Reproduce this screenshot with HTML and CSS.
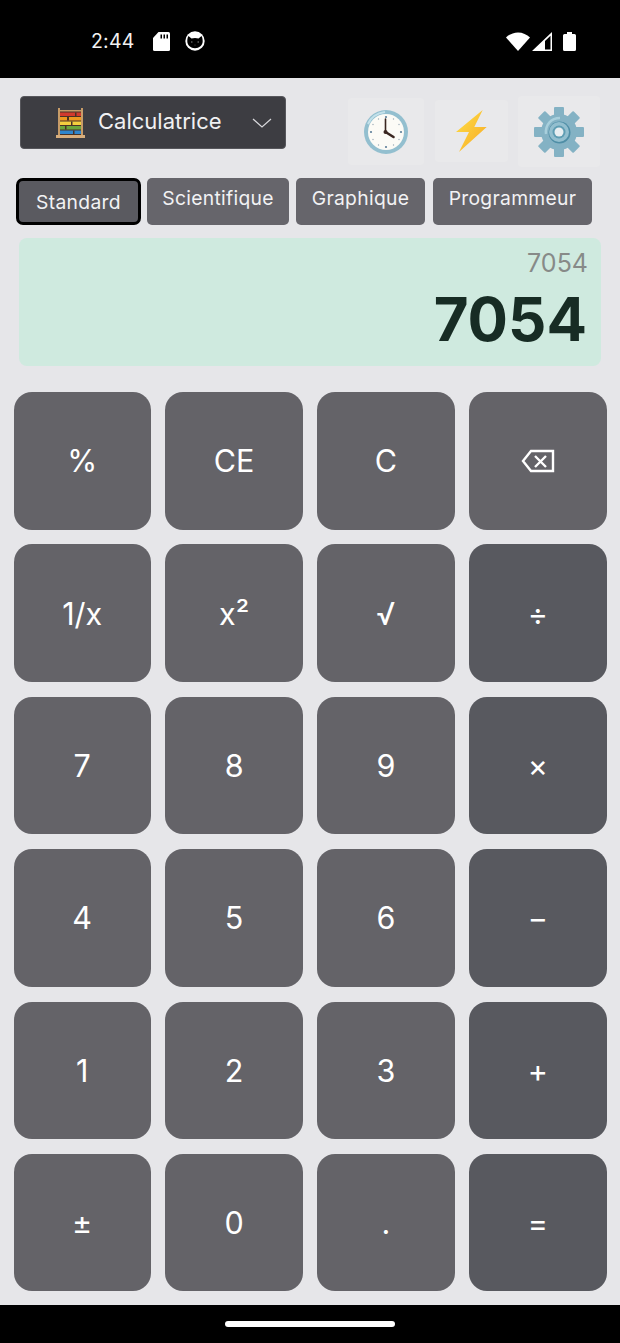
FILE: index.html
```html
<!DOCTYPE html>
<html lang="fr">
<head>
  <meta charset="UTF-8" />
  <title>Calculatrice</title>
  <meta name="viewport" content="width=device-width, initial-scale=1" />
  <link rel="stylesheet" href="styles.css">
</head>
<body>
  <div class="statusBar">
    <span class="clockText">2:44</span>
    <svg class="sdIcon" width="17" height="19" viewBox="0 0 17 19">
      <path fill="#fff" d="M5.500 0h10A1.500 1.500 0 0 1 17 1.500v16a1.500 1.500 0 0 1-1.500 1.500h-14A1.500 1.500 0 0 1 0 17.500V6z"/>
      <path fill="#000" d="M7.500 2.500h1.500v4H7.500zM10.500 2.500H12v4h-1.500zM13.500 2.500H15v4h-1.500z"/>
    </svg>
    <svg class="catIcon" width="20" height="20" viewBox="0 0 20 20">
      <circle cx="10" cy="10" r="9.700" fill="#fff"/>
      <path fill="#000" d="M3.500 5 6.500 7.500c2-.7 5-.7 7 0l3-2.500c.8 1.400 1.200 3.200 1.200 5.200 0 4-3.500 7-7.700 7s-7.700-3-7.700-7c0-2 .4-3.800 1.200-5.200z"/>
      <circle cx="6.800" cy="11" r=".8" fill="#777"/>
      <circle cx="13.200" cy="11" r=".8" fill="#777"/>
      <circle cx="10" cy="14" r=".6" fill="#555"/>
    </svg>
    <span class="spacer"></span>
    <svg class="wifiIcon" width="24" height="19" viewBox="0 0 24 19">
      <path fill="#fff" d="M0 5.500C3 2.500 7.500 0.500 12 0.500s9 2 12 5L12 19z"/>
    </svg>
    <svg class="signalIcon" width="20" height="19" viewBox="0 0 20 19">
      <path fill="#fff" fill-rule="evenodd" d="M20 0v19H0zM18.500 3.800 13 9v8.500h5.500z"/>
    </svg>
    <svg class="batteryIcon" width="13" height="19" viewBox="0 0 13 19">
      <path fill="#fff" d="M4 0h5v2h2.500A1.500 1.500 0 0 1 13 3.500v14a1.500 1.500 0 0 1-1.500 1.500h-10A1.500 1.500 0 0 1 0 17.500v-14A1.500 1.500 0 0 1 1.500 2H4z"/>
    </svg>
  </div>

  <main class="app">
    <div class="topRow">
      <div class="modeSelect">
        <svg class="abacus" width="29" height="30" viewBox="0 0 29 30">
          <rect x="2" y="3" width="25" height="24" fill="#4a3226"/>
          <rect x="4" y="4.500" width="21" height="3.500" fill="#d23a2e"/>
          <rect x="4" y="9" width="21" height="3.500" fill="#ee9820"/>
          <rect x="4" y="13.500" width="21" height="3.500" fill="#f4cf3e"/>
          <rect x="4" y="18" width="21" height="3.500" fill="#6aa53c"/>
          <rect x="4" y="22.500" width="21" height="3.500" fill="#2e85cc"/>
          <g fill="#4a3226">
            <rect x="11" y="9" width="2" height="3.500"/>
            <rect x="15" y="13.500" width="1.500" height="3.500"/>
            <rect x="9" y="18" width="1.500" height="3.500"/>
            <rect x="19" y="4.500" width="1.500" height="3.500"/>
            <rect x="17" y="22.500" width="1.500" height="3.500"/>
          </g>
          <rect x="2" y="0" width="2" height="27" fill="#c79c68"/>
          <rect x="25" y="0" width="2" height="27" fill="#c79c68"/>
          <rect x="2" y="2" width="25" height="1.500" fill="#c79c68"/>
          <rect x="0" y="27" width="29" height="3" fill="#d8ae7c"/>
        </svg>
        <span class="modeLabel">Calculatrice</span>
        <svg class="chevron" width="20" height="10" viewBox="0 0 20 10">
          <path fill="none" stroke="#d8d8dc" stroke-width="1.200" d="M1 1l9 8 9-8"/>
        </svg>
      </div>
      <div class="iconBtn clockBtn">
        <svg width="44" height="44" viewBox="0 0 44 44">
          <circle cx="22" cy="22" r="22" fill="#93bfcf"/>
          <path fill="none" stroke="#c4e1ea" stroke-width="2" d="M4 14C7 7 14 3 21 2"/>
          <circle cx="22" cy="22" r="18" fill="#fcfbf6"/>
          <g fill="#5d7f99">
            <circle cx="22" cy="7" r="1.100"/><circle cx="22" cy="37" r="1.100"/>
            <circle cx="7" cy="22" r="1.100"/><circle cx="37" cy="22" r="1.100"/>
          </g>
          <g fill="#9aa9b5">
            <circle cx="14.500" cy="9" r=".7"/><circle cx="29.500" cy="9" r=".7"/>
            <circle cx="14.500" cy="35" r=".7"/><circle cx="29.500" cy="35" r=".7"/>
            <circle cx="9" cy="14.500" r=".7"/><circle cx="35" cy="14.500" r=".7"/>
            <circle cx="9" cy="29.500" r=".7"/><circle cx="35" cy="29.500" r=".7"/>
          </g>
          <path fill="none" stroke="#3a2620" stroke-width="1.600" stroke-linecap="round" d="M21.500 9v13"/>
          <path fill="none" stroke="#3a2620" stroke-width="2.600" stroke-linecap="round" d="M21.500 22l8 5"/>
          <circle cx="21.500" cy="22" r="2" fill="#3a2620"/>
        </svg>
      </div>
      <div class="iconBtn boltBtn">
        <svg width="31" height="42" viewBox="0 0 31 42">
          <defs>
            <linearGradient id="boltFill" x1="0" y1="0" x2="1" y2="1">
              <stop offset="0" stop-color="#fde047"/>
              <stop offset="1" stop-color="#f8a825"/>
            </linearGradient>
          </defs>
          <path fill="url(#boltFill)" d="M26.700 0 0 22h13L3 42l27.700-25H18.300z"/>
        </svg>
      </div>
      <div class="iconBtn gearBtn">
        <svg width="50" height="50" viewBox="0 0 50 50">
          <g fill="#84b2c4">
            <rect x="20" y="0" width="10" height="50" rx="1"/>
            <rect x="20" y="0" width="10" height="50" rx="1" transform="rotate(45 25 25)"/>
            <rect x="20" y="0" width="10" height="50" rx="1" transform="rotate(90 25 25)"/>
            <rect x="20" y="0" width="10" height="50" rx="1" transform="rotate(135 25 25)"/>
            <circle cx="25" cy="25" r="18"/>
          </g>
          <path fill="none" stroke="#a8cfdc" stroke-width="2.500" d="M12 27C11 18 17 11 26 11"/>
          <circle cx="25.500" cy="25.500" r="11" fill="#4f8ea6"/>
          <circle cx="25" cy="25" r="10" fill="#93bfcf"/>
          <circle cx="25" cy="25" r="6.500" fill="#5f9db3"/>
          <circle cx="25" cy="25" r="4.500" fill="#e8eef1"/>
        </svg>
      </div>
    </div>

    <div class="tabs">
      <button class="tab tabActive">Standard</button>
      <button class="tab tabScientific">Scientifique</button>
      <button class="tab tabGraph">Graphique</button>
      <button class="tab tabProg">Programmeur</button>
    </div>

    <div class="display">
      <div class="history">7054</div>
      <div class="result">7054</div>
    </div>

    <div class="keypad">
      <button class="key">%</button>
      <button class="key">CE</button>
      <button class="key">C</button>
      <button class="key">
        <svg width="34" height="24" viewBox="0 0 34 24">
          <path fill="none" stroke="#fff" stroke-width="2.400" d="M32 2H10L2 12l8 10h22z"/>
          <path fill="none" stroke="#fff" stroke-width="2.400" d="M14 7l11 11M25 7 14 18"/>
        </svg>
      </button>
      <button class="key">1/x</button>
      <button class="key">x²</button>
      <button class="key">√</button>
      <button class="key op">÷</button>
      <button class="key">7</button>
      <button class="key">8</button>
      <button class="key">9</button>
      <button class="key op">×</button>
      <button class="key">4</button>
      <button class="key">5</button>
      <button class="key">6</button>
      <button class="key op">−</button>
      <button class="key">1</button>
      <button class="key">2</button>
      <button class="key">3</button>
      <button class="key op">+</button>
      <button class="key">±</button>
      <button class="key">0</button>
      <button class="key">.</button>
      <button class="key op">=</button>
    </div>
  </main>

  <div class="navBar"><span class="handle"></span></div>
</body>
</html>
```

FILE: styles.css
```css
/* Calculator page */
html, body {
  margin: 0;
  padding: 0;
  height: 100%;
}
body {
  width: 620px;
  height: 1343px;
  overflow: hidden;
  display: flex;
  flex-direction: column;
  background: #e6e6e9;
  color: #fff;
  font-family: Inter, 'Liberation Sans', sans-serif;
}
button {
  font-family: inherit;
  border: none;
  margin: 0;
  padding: 0;
  color: #fff;
}

/* status bar */
.statusBar {
  height: 78px;
  flex: none;
  background: #000;
  display: flex;
  align-items: center;
  padding: 4px 44px 0 91px;
  box-sizing: border-box;
}
.clockText {
  font-size: 19.500px;
  color: #f2f2f2;
  letter-spacing: 0.2px;
  width: 62px;
}
.sdIcon { margin-right: 16px; }
.catIcon { margin-left: -1px; }
.spacer { flex-grow: 1; }
.wifiIcon { margin-right: 2px; }
.signalIcon { margin-right: 11px; }

/* main */
.app {
  flex-grow: 1;
  display: flex;
  flex-direction: column;
  min-height: 0;
}
.topRow {
  height: 100px;
  flex: none;
  display: flex;
  align-items: flex-start;
  padding: 18px 0 0 20px;
  box-sizing: border-box;
}
.modeSelect {
  width: 266px;
  height: 53px;
  box-sizing: border-box;
  background: #3d3d42;
  border: 1px solid #57575c;
  border-radius: 4px;
  display: flex;
  align-items: center;
  padding-left: 35px;
}
.modeLabel {
  font-size: 22px;
  color: #f1f1f3;
  margin: 0 0 3px 13px;
  width: 154px;
}
.iconBtn {
  display: flex;
  align-items: center;
  justify-content: center;
  background: #e9e9eb;
  border-radius: 4px;
}
.clockBtn { width: 76px; height: 67px; margin: 2px 0 0 62px; }
.boltBtn { width: 73px; height: 62px; margin: 4px 0 0 11px; }
.gearBtn { width: 82px; height: 71px; margin: 0 0 0 10px; }

.tabs {
  flex: none;
  display: flex;
  height: 47px;
  padding-left: 16px;
}
.tab {
  height: 47px;
  box-sizing: border-box;
  background: #66656b;
  border-radius: 5px;
  font-size: 19.300px;
  letter-spacing: 0.3px;
  color: #f2f2f4;
  padding-bottom: 8px;
}
.tabActive {
  width: 125px;
  background: #5a5a60;
  border: 3px solid #000;
  border-radius: 7px;
  padding-bottom: 0;
}
.tabScientific { width: 142px; margin-left: 6px; }
.tabGraph { width: 129px; margin-left: 7px; }
.tabProg { width: 159px; margin-left: 8px; }

.display {
  flex: none;
  height: 128px;
  margin: 13px 19px 0;
  padding: 0 13px 0 0;
  box-sizing: border-box;
  background: #cfeadf;
  border-radius: 8px;
  text-align: right;
}
.history {
  font-size: 25px;
  line-height: 30px;
  padding-top: 10px;
  color: #878a88;
}
.result {
  font-size: 60px;
  line-height: 70px;
  margin-top: 6px;
  margin-right: 1px;
  font-weight: 700;
  color: #172c24;
}

.keypad {
  flex: none;
  margin-top: 26px;
  padding: 0 13.500px;
  display: grid;
  grid-template-columns: repeat(4, 1fr);
  grid-auto-rows: 137.500px;
  gap: 14.900px 14.500px;
}
.key {
  background: #646368;
  border-radius: 18px;
  font-size: 30.500px;
  display: flex;
  align-items: center;
  justify-content: center;
}
.op {
  background: #58595f;
}

/* nav bar */
.navBar {
  position: absolute;
  top: 1305px;
  left: 0;
  width: 620px;
  height: 38px;
  background: #000;
  display: flex;
  align-items: center;
  justify-content: center;
}
.handle {
  width: 170px;
  height: 6px;
  background: #fff;
  border-radius: 3px;
}
```
